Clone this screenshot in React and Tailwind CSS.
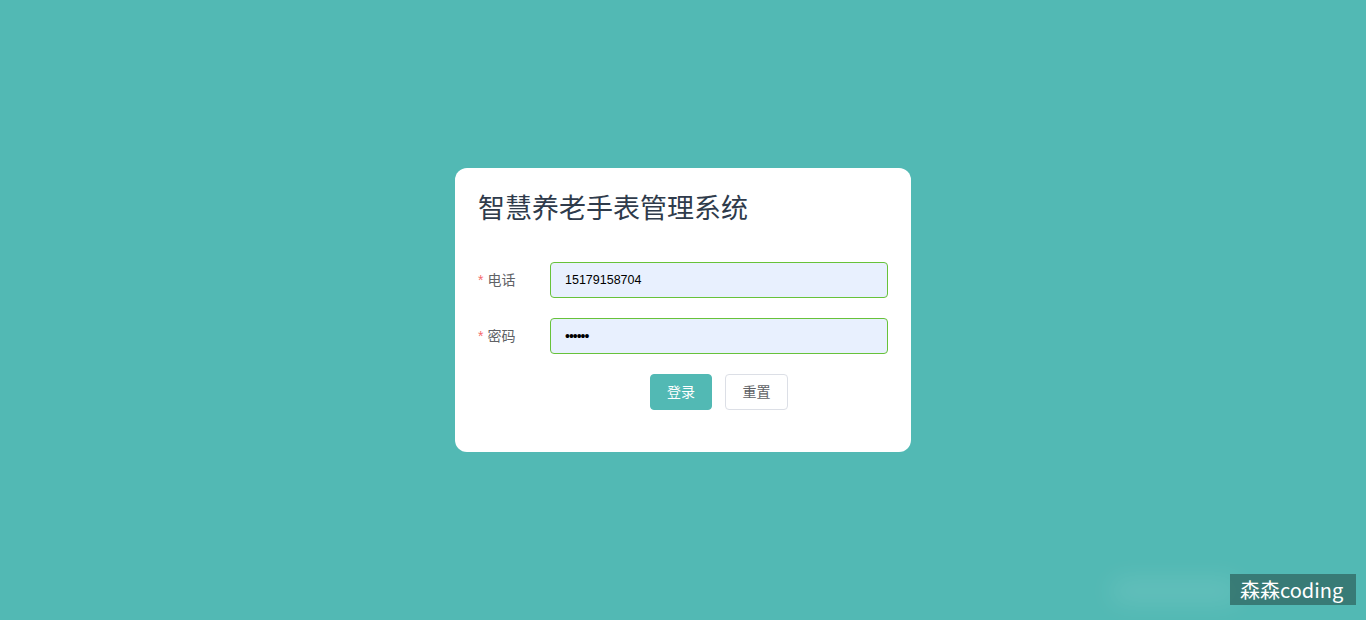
export default function App() {
  return (
    <div
      className="relative min-h-screen h-[620px] bg-[#52b9b4] flex items-center justify-center overflow-hidden"
      style={{ fontFamily: '"Liberation Sans", Arial, "Noto Sans CJK SC", sans-serif' }}
    >
      {/* 登录卡片 */}
      <div className="w-[456px] h-[284px] bg-white rounded-[12px] px-[23px] pt-[26px]">
        <h1 className="text-[27px] leading-[30px] text-[#2f3b4b] font-normal">智慧养老手表管理系统</h1>

        <div className="mt-[38px] flex items-center h-[36px]">
          <label className="w-[72px] text-[14px] text-[#606266]">
            <span className="text-[#f56c6c] mr-[4px]">*</span>电话
          </label>
          <div className="flex-1 h-[36px] rounded-[4px] border border-[#67c23a] bg-[#e8f0fe] px-[14px] flex items-center text-[12.5px] text-black">
            15179158704
          </div>
        </div>

        <div className="mt-[20px] flex items-center h-[36px]">
          <label className="w-[72px] text-[14px] text-[#606266]">
            <span className="text-[#f56c6c] mr-[4px]">*</span>密码
          </label>
          <div className="flex-1 h-[36px] rounded-[4px] border border-[#67c23a] bg-[#e8f0fe] px-[14px] flex items-center text-[14px] text-black tracking-[-1px]">
            ••••••
          </div>
        </div>

        <div className="mt-[20px] flex">
          <div className="w-[72px]"></div>
          <div className="flex-1 flex justify-center gap-[13px]">
            <button className="w-[62px] h-[36px] rounded-[4px] bg-[#52b9b4] border border-[#52b9b4] text-white text-[14px]">
              登录
            </button>
            <button className="w-[63px] h-[36px] rounded-[4px] bg-white border border-[#dcdfe6] text-[#606266] text-[14px]">
              重置
            </button>
          </div>
        </div>
      </div>

      {/* 水印 */}
      <div className="absolute left-[1110px] top-[578px] w-[130px] h-[26px] rounded-full bg-white/10 blur-md"></div>
      <div
        className="absolute left-[1230px] top-[574px] w-[126px] h-[31px] bg-[#35746f]/90 text-white text-[20px] leading-[31px] pl-[10px] whitespace-nowrap"
        style={{ fontFamily: '"Noto Sans CJK SC", "Noto Sans", sans-serif' }}
      >
        森森coding
      </div>
    </div>
  );
}
